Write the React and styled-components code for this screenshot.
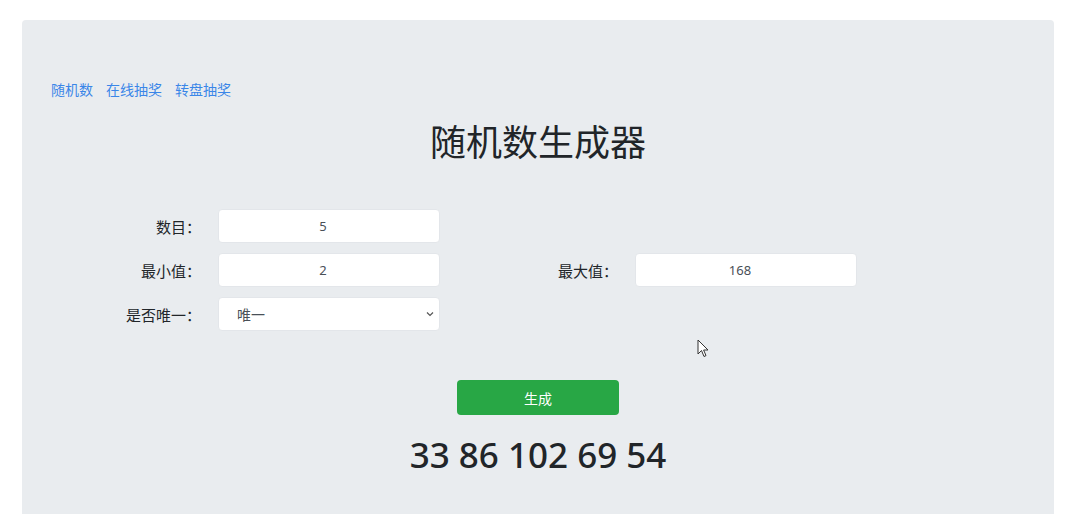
import React, { useState } from "react";
import styled, { createGlobalStyle } from "styled-components";

const GlobalStyle = createGlobalStyle`
  html, body {
    margin: 0;
    padding: 0;
    background: #fff;
    font-family: "Noto Sans", "Noto Sans CJK SC", sans-serif;
    color: #212529;
  }
  * { box-sizing: border-box; }
`;

const Page = styled.div`
  padding: 20px 26px 0 22px;
  height: 514px;
  overflow: hidden;
  position: relative;
`;

const Jumbotron = styled.div`
  background: #e9ecef;
  border-radius: 4px 4px 0 0;
  padding: 59px 29px 40px;
  height: 494px;
`;

const Nav = styled.nav`
  display: flex;
  gap: 13px;
  font-size: 14px;
  line-height: 20px;
`;

const NavLink = styled.a`
  color: #3a86e8;
  text-decoration: none;
  font-family: "Noto Sans CJK SC", sans-serif;
  cursor: pointer;
`;

const Title = styled.h1`
  margin: 13px 0 0;
  text-align: center;
  font-size: 36px;
  font-weight: 400;
  line-height: 56px;
  color: #212529;
  font-family: "Noto Sans CJK SC", sans-serif;
`;

const Form = styled.div`
  margin-top: 41px;
  display: grid;
  grid-template-columns: 150px 222px 161px 222px;
  column-gap: 17px;
  row-gap: 10px;
  align-items: center;
`;

const Label = styled.label`
  text-align: right;
  font-size: 15px;
  color: #212529;
  font-family: "Noto Sans CJK SC", sans-serif;
  padding-right: 0;
`;

const Input = styled.input`
  height: 34px;
  width: 100%;
  border: 1px solid #e3e6ea;
  border-radius: 4px;
  background: #fff;
  text-align: center;
  padding: 0 12px 0 0;
  font-size: 13px;
  color: #495057;
  font-family: "Noto Sans", sans-serif;
  outline: none;
`;

const SelectWrap = styled.div`
  position: relative;
  height: 34px;
`;

const Select = styled.select`
  appearance: none;
  width: 100%;
  height: 34px;
  border: 1px solid #e3e6ea;
  border-radius: 4px;
  background: #fff;
  padding: 0 12px 0 18px;
  font-size: 14px;
  color: #495057;
  font-family: "Noto Sans CJK SC", sans-serif;
  outline: none;
`;

const Chevron = styled.svg`
  position: absolute;
  right: 6px;
  top: 14px;
  pointer-events: none;
`;

const Actions = styled.div`
  display: flex;
  flex-direction: column;
  align-items: center;
  margin-top: 49px;
`;

const Button = styled.button`
  width: 162px;
  height: 35px;
  background: #28a745;
  border: none;
  border-radius: 4px;
  color: #fff;
  font-size: 14px;
  font-family: "Noto Sans CJK SC", sans-serif;
  cursor: pointer;

  &:hover {
    background: #218838;
  }
`;

const Result = styled.div`
  margin-top: 15px;
  font-size: 35px;
  font-weight: 500;
  line-height: 50px;
  color: #212529;
  font-family: "Noto Sans", sans-serif;
`;

const Cursor = styled.svg`
  position: absolute;
  left: 697px;
  top: 339px;
`;

function randomNumbers(count, min, max, unique) {
  const out = [];
  let guard = 0;
  while (out.length < count && guard < 10000) {
    guard++;
    const n = Math.floor(Math.random() * (max - min + 1)) + min;
    if (unique && out.includes(n)) continue;
    out.push(n);
  }
  return out;
}

export default function App() {
  const [count, setCount] = useState("5");
  const [min, setMin] = useState("2");
  const [max, setMax] = useState("168");
  const [unique, setUnique] = useState("1");
  const [result, setResult] = useState("33 86 102 69 54");

  const generate = () => {
    const nums = randomNumbers(Number(count), Number(min), Number(max), unique === "1");
    setResult(nums.join(" "));
  };

  return (
    <Page>
      <GlobalStyle />
      <Jumbotron>
        <Nav>
          <NavLink>随机数</NavLink>
          <NavLink>在线抽奖</NavLink>
          <NavLink>转盘抽奖</NavLink>
        </Nav>
        <Title>随机数生成器</Title>

        <Form>
          <Label>数目：</Label>
          <Input value={count} onChange={(e) => setCount(e.target.value)} />
          <span />
          <span />

          <Label>最小值：</Label>
          <Input value={min} onChange={(e) => setMin(e.target.value)} />
          <Label>最大值：</Label>
          <Input value={max} onChange={(e) => setMax(e.target.value)} />

          <Label>是否唯一：</Label>
          <SelectWrap>
            <Select value={unique} onChange={(e) => setUnique(e.target.value)}>
              <option value="1">唯一</option>
              <option value="0">不唯一</option>
            </Select>
            <Chevron width="8" height="6" viewBox="0 0 8 6">
              <path d="M1 1.5 L4 4.5 L7 1.5" fill="none" stroke="#555" strokeWidth="1.2" />
            </Chevron>
          </SelectWrap>
        </Form>

        <Actions>
          <Button onClick={generate}>生成</Button>
          <Result>{result}</Result>
        </Actions>
      </Jumbotron>
      <Cursor width="12" height="19" viewBox="0 0 12 19">
        <path d="M1 1 L1 15 L4.5 11.5 L7 17.5 L9 16.6 L6.6 11 L11 11 Z" fill="#fff" stroke="#333" strokeWidth="1" strokeLinejoin="round" />
      </Cursor>
    </Page>
  );
}
